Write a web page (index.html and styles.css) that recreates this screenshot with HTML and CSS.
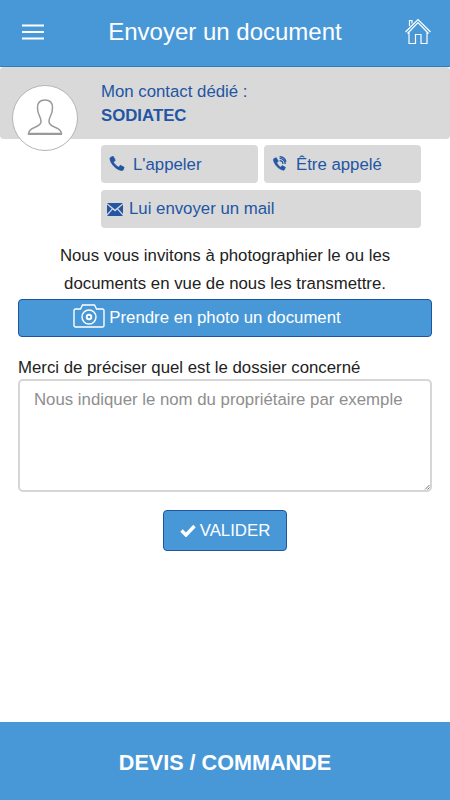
FILE: index.html
```html
<!DOCTYPE html>
<html lang="fr">
<head>
<meta charset="utf-8">
<title>Envoyer un document</title>
<link rel="stylesheet" href="styles.css">
</head>
<body>
<div class="app">
  <header class="topbar">
    <svg class="menu-icon" width="22" height="16" viewBox="0 0 22 16"><path d="M0 1.500h22M0 8h22M0 14.500h22" stroke="#fff" stroke-width="2.200" fill="none"/></svg>
    <h1 class="title">Envoyer un document</h1>
    <svg class="home-icon" width="26" height="27" viewBox="0 0 26 27" fill="none" stroke="#fff" stroke-width="1.200"><path d="M.5 14 13 1.500 25.500 14M4.500 8V2.500h2.500v3M2.500 15.500 13 4.500 23.500 15.500M4 14v11.500h6.500v-9h5.500v9h6V14"/></svg>
  </header>
  <main class="content">
    <section class="contact">
      <div class="avatar">
        <svg width="36" height="36" viewBox="0 0 36 36" fill="none" stroke="#9a9a9a" stroke-width="1.500"><path d="M18 1c-5 0-7.500 3-7.500 7.500 0 3 .5 5.500 1.800 8 .9 2 1.700 3.500 1.700 6 0 2.500-2.500 4.500-6.500 6C4 29.700 2 31.500 1.500 34.500h33c-.5-3-2.500-4.800-6-6-4-1.500-6.500-3.500-6.500-6 0-2.500.8-4 1.700-6 1.300-2.500 1.800-5 1.800-8C25.500 4 23 1 18 1z"/><path d="M1 35h34" stroke-width="2"/></svg>
      </div>
      <p class="contact-label">Mon contact dédié :</p>
      <p class="contact-name">SODIATEC</p>
    </section>
    <div class="actions">
      <a class="action action-call">
        <svg width="16" height="15" viewBox="0 0 18 18"><path fill="#2255a4" stroke="#2255a4" stroke-width="1" d="M4.500.5 1.500 1.500C.5 2 .5 3 .8 4.500 2 10 8 16 13.500 17.200c1.500.3 2.500.3 3-.7l1-3-4.500-2.300-2 2.300C8.500 12.500 5.500 9.500 4.600 7.300l2.300-2z"/></svg>
        L'appeler
      </a>
      <a class="action action-call">
        <svg width="16" height="15" viewBox="0 0 16 18"><path fill="#2255a4" stroke="#2255a4" stroke-width=".8" d="M3.500 2 1 3C.2 3.500 0 4.300.3 5.500 1.500 10.500 6 15.500 11 16.800c1.300.3 2 .2 2.500-.7l.9-2.600-3.900-2-1.700 2C7.200 12.500 4.800 10 4 8l2-1.700z"/><path fill="none" stroke="#2255a4" stroke-width="1.500" d="M7.500 5.500a4 4 0 0 1 4 4M7.500 2.800a6.700 6.700 0 0 1 6.700 6.700M7.500.7a8.800 8.800 0 0 1 7.800 6"/></svg>
        Être appelé
      </a>
      <a class="action action-wide">
        <svg width="16" height="13" viewBox="0 0 16 13"><path fill="#2255a4" d="M0 0h16L8 6.500zM0 1.500 4.800 5.800 0 11zM16 1.500 11.200 5.800 16 11zM5.700 6.600 8 8.500l2.300-1.900L16 13H0z"/></svg>
        Lui envoyer un mail
      </a>
    </div>
    <p class="intro">Nous vous invitons à photographier le ou les documents en vue de nous les transmettre.</p>
    <button class="btn btn-photo" type="button">
      <svg width="32" height="24" viewBox="0 0 32 24" fill="none" stroke="#fff" stroke-width="1.400"><path d="M2.500 5h5l2-4h12l2 4h6a1.500 1.500 0 0 1 1.500 1.500v15a1.500 1.500 0 0 1-1.500 1.500h-27A1.500 1.500 0 0 1 1 21.500v-15A1.500 1.500 0 0 1 2.500 5z"/><circle cx="16" cy="13" r="7"/><circle cx="16" cy="13" r="3.200" fill="#fff" stroke="none"/><circle cx="16" cy="13" r="1.300" fill="#4898d8" stroke="none"/></svg>
      Prendre en photo un document
    </button>
    <label class="field-label" for="dossier">Merci de préciser quel est le dossier concerné</label>
    <div class="field-wrap">
      <textarea class="field" id="dossier" placeholder="Nous indiquer le nom du propriétaire par exemple"></textarea>
      <svg class="grip" width="6" height="6" viewBox="0 0 6 6"><path d="M5.500 1 1 5.500M5.500 3.500 3.500 5.500" stroke="#777" stroke-width="1" fill="none"/></svg>
    </div>
    <div class="submit-row">
      <button class="btn btn-submit" type="button">
        <svg width="16" height="13" viewBox="0 0 16 13"><path fill="none" stroke="#fff" stroke-width="3.400" d="M1.500 6.500 6 11 14.500 2"/></svg>
        VALIDER
      </button>
    </div>
  </main>
  <footer class="footer">DEVIS / COMMANDE</footer>
</div>
</body>
</html>
```
FILE: styles.css
```css
* { box-sizing: border-box; }
html, body { margin: 0; height: 100%; }
body { font-family: "Liberation Sans", Arial, sans-serif; background: #fff; color: #222; }
.app { display: flex; flex-direction: column; height: 800px; overflow: hidden; }
.topbar {
  height: 67px;
  flex: none;
  background: #4898d8;
  border-bottom: 1px solid #2f7fc0;
  display: flex;
  align-items: center;
  padding: 0 19px 3px 22px;
  color: #fff;
}
.menu-icon { flex: none; }
.title { flex: 1; margin: 0; font-size: 24px; font-weight: 400; text-align: center; padding-left: 1px; }
.home-icon { flex: none; }
.content { flex: 1; position: relative; }
.contact {
  height: 72px;
  background: #d9d9d9;
  border-radius: 4px;
  padding: 16px 0 0 101px;
  color: #2255a4;
  font-size: 16.800px;
}
.contact-label { margin: 0; line-height: 18px; }
.contact-name { margin: 6px 0 0; line-height: 18px; font-weight: 700; }
.avatar {
  position: absolute;
  left: 12px;
  top: 18px;
  width: 66px;
  height: 66px;
  border-radius: 50%;
  background: #fff;
  border: 1px solid #b5b5b5;
  display: flex;
  align-items: center;
  justify-content: center;
  padding-bottom: 2px;
}
.actions {
  display: grid;
  grid-template-columns: 157px 157px;
  gap: 7px 6px;
  margin: 6px 0 0 101px;
}
.action {
  height: 38px;
  background: #d9d9d9;
  border-radius: 4px;
  display: flex;
  align-items: center;
  font-size: 16.800px;
  color: #2255a4;
}
.action-call { gap: 8px; padding: 2px 0 0 8px; }
.action-call svg { margin-bottom: 4px; }
.action-wide { grid-column: 1 / 3; gap: 6px; padding-left: 6px; }
.action svg { flex: none; }
.intro { margin: 14px 30px 0; font-size: 16.800px; line-height: 28px; text-align: center; color: #222; }
.btn {
  background: #4898d8;
  color: #fff;
  font: 16.800px "Liberation Sans", Arial, sans-serif;
  border: 1px solid #1e55a0;
  border-radius: 4px;
  display: flex;
  align-items: center;
  justify-content: center;
  padding: 0;
}
.btn-photo { width: 414px; height: 38px; margin: 1px 0 0 18px; gap: 4px; padding: 0 36px 0 0; }
.btn-photo svg { margin-bottom: 4px; }
.field-label { display: block; margin: 21px 18px 0; font-size: 16.800px; line-height: 19px; color: #222; }
.field-wrap { position: relative; width: 414px; margin: 2px 0 0 18px; }
.field {
  display: block;
  width: 414px;
  height: 113px;
  padding: 9px 14px;
  border: 2px solid #d6d6d6;
  border-radius: 5px;
  font: 16.800px/20px "Liberation Sans", Arial, sans-serif;
  background: #fff;
  color: #222;
  resize: none;
}
.field::placeholder { color: #8e8e8e; opacity: 1; }
.grip { position: absolute; right: 2px; bottom: 2px; }
.submit-row { display: flex; justify-content: center; margin-top: 18px; }
.btn-submit { width: 124px; height: 41px; gap: 4px; }
.footer {
  height: 78px;
  flex: none;
  background: #4898d8;
  color: #fff;
  font-size: 21.600px;
  font-weight: 700;
  display: flex;
  align-items: center;
  justify-content: center;
  padding-top: 3px;
}
```
